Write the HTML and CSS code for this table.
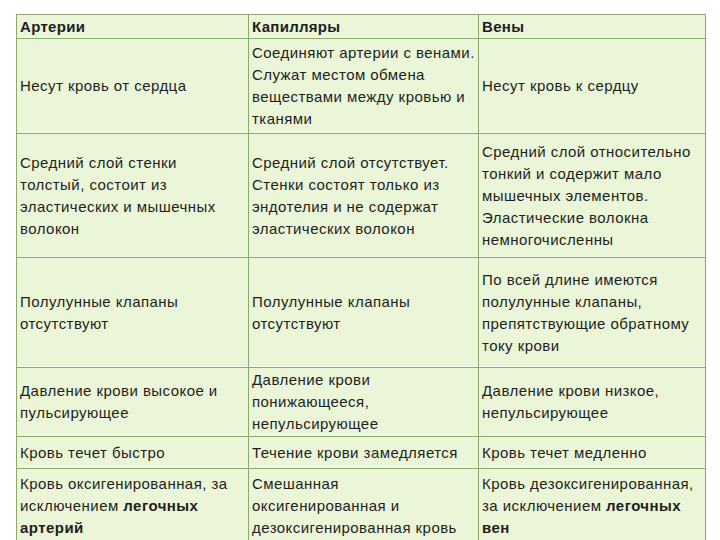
FILE: index.html
```html
<!DOCTYPE html>
<html lang="ru">
<head>
<meta charset="utf-8">
<link rel="stylesheet" href="styles.css">
</head>
<body>
<table class="vessels">
  <tr class="r-head">
    <th>Артерии</th>
    <th>Капилляры</th>
    <th>Вены</th>
  </tr>
  <tr class="r1">
    <td>Несут кровь от сердца</td>
    <td>Соединяют артерии с венами.<br>Служат местом обмена<br>веществами между кровью и<br>тканями</td>
    <td>Несут кровь к сердцу</td>
  </tr>
  <tr class="r2">
    <td>Средний слой стенки<br>толстый, состоит из<br>эластических и мышечных<br>волокон</td>
    <td>Средний слой отсутствует.<br>Стенки состоят только из<br>эндотелия и не содержат<br>эластических волокон</td>
    <td>Средний слой относительно<br>тонкий и содержит мало<br>мышечных элементов.<br>Эластические волокна<br>немногочисленны</td>
  </tr>
  <tr class="r3">
    <td>Полулунные клапаны<br>отсутствуют</td>
    <td>Полулунные клапаны<br>отсутствуют</td>
    <td>По всей длине имеются<br>полулунные клапаны,<br>препятствующие обратному<br>току крови</td>
  </tr>
  <tr class="r4">
    <td>Давление крови высокое и<br>пульсирующее</td>
    <td>Давление крови<br>понижающееся,<br>непульсирующее</td>
    <td>Давление крови низкое,<br>непульсирующее</td>
  </tr>
  <tr class="r5">
    <td>Кровь течет быстро</td>
    <td>Течение крови замедляется</td>
    <td>Кровь течет медленно</td>
  </tr>
  <tr class="r6">
    <td>Кровь оксигенированная, за<br>исключением <b>легочных<br>артерий</b></td>
    <td>Смешанная<br>оксигенированная и<br>дезоксигенированная кровь</td>
    <td>Кровь дезоксигенированная,<br>за исключением <b>легочных<br>вен</b></td>
  </tr>
</table>
</body>
</html>
```

FILE: styles.css
```css
html, body {
  margin: 0;
  padding: 0;
  background: #ffffff;
}

body {
  font-family: "Liberation Sans", Arial, sans-serif;
  color: #1e1e1e;
}

.vessels {
  border-collapse: collapse;
  margin: 14px 0 0 16px;
  width: 690px;
  table-layout: fixed;
  background: #ebf6d8;
  font-size: 15px;
  line-height: 22px;
  letter-spacing: 0.45px;
}

.vessels th,
.vessels td {
  border: 1px solid #8ca86c;
  padding: 0 3px;
  text-align: left;
  vertical-align: middle;
  white-space: nowrap;
  box-shadow: inset 0 -2px 0 -1px #f4fbe9;
}

.vessels th {
  font-weight: bold;
  letter-spacing: 0.3px;
}

.vessels th:nth-child(1),
.vessels td:nth-child(1) { width: 225px; }
.vessels th:nth-child(2),
.vessels td:nth-child(2) { width: 223px; }

.r-head th { height: 23px; }
.r1 td { height: 94px; }
.r2 td { height: 123px; }
.r3 td { height: 109px; }
.r4 td { height: 68px; }
.r5 td { height: 31px; }
.r6 td { height: 76px; vertical-align: top; padding-top: 4px; }
```
